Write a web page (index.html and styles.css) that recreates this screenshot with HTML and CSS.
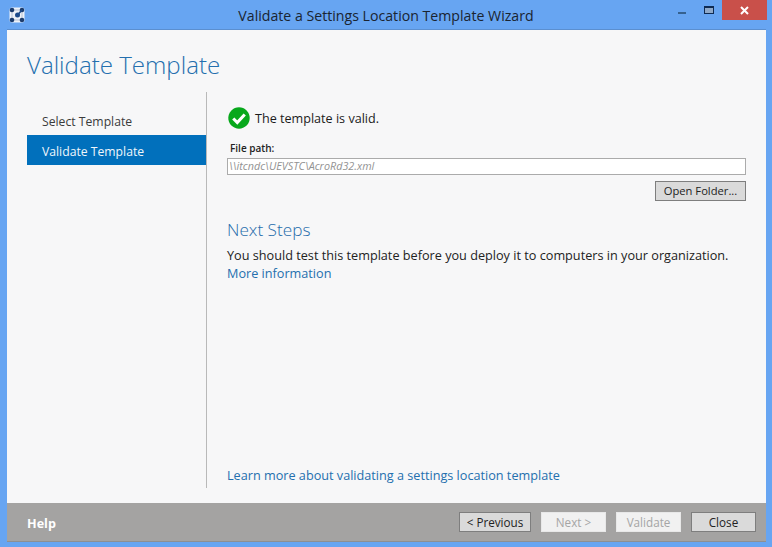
FILE: index.html
```html
<!DOCTYPE html>
<html lang="en">
<head>
<meta charset="utf-8">
<title>Validate a Settings Location Template Wizard</title>
<link rel="stylesheet" href="styles.css">
</head>
<body>
<div class="window">
  <header class="titlebar">
    <svg class="app-icon" width="16" height="16" viewBox="0 0 16 16">
      <rect x="0.5" y="0.5" width="15" height="15" rx="2.5" fill="#eef2f8"/>
      <path d="M3 5.5v5M13 5.5v5M5.5 3h5M5.5 13h5" stroke="#7f93b3" stroke-width="1" stroke-dasharray="1 1"/>
      <circle cx="3" cy="3" r="2.3" fill="#1c3d6e"/>
      <circle cx="13" cy="3" r="2.3" fill="#1c3d6e"/>
      <circle cx="3" cy="13" r="2.3" fill="#1c3d6e"/>
      <circle cx="13" cy="13" r="2.3" fill="#1c3d6e"/>
      <circle cx="8.5" cy="8" r="2.5" fill="#1c4a8a"/>
      <path d="M8.5 8 13 3" stroke="#1c4a8a" stroke-width="1.6"/>
    </svg>
    <div class="title">Validate a Settings Location Template Wizard</div>
    <div class="controls">
      <span class="min"></span>
      <span class="max"></span>
      <span class="close-btn">
        <svg width="9" height="9" viewBox="0 0 9 9"><path d="M1 1l7 7M8 1L1 8" stroke="#fff" stroke-width="2"/></svg>
      </span>
    </div>
  </header>
  <div class="client">
    <h1 class="page-title">Validate Template</h1>
    <div class="main">
      <nav class="side">
        <div class="step">Select Template</div>
        <div class="step active">Validate Template</div>
      </nav>
      <section class="content">
        <div class="status">
          <svg width="22" height="22" viewBox="0 0 23 23">
            <circle cx="11.5" cy="11.5" r="11.2" fill="#08a81c"/>
            <path d="M5.5 12l4.2 4.2 7.8-8.4" fill="none" stroke="#fff" stroke-width="3.2"/>
          </svg>
          <span class="status-text">The template is valid.</span>
        </div>
        <label class="field-label">File path:</label>
        <div class="path">\\itcndc\UEVSTC\AcroRd32.xml</div>
        <div class="folder-row"><button class="btn folder">Open Folder...</button></div>
        <h2 class="next">Next Steps</h2>
        <p class="desc">You should test this template before you deploy it to computers in your organization.</p>
        <a class="link more">More information</a>
        <a class="link learn">Learn more about validating a settings location template</a>
      </section>
    </div>
    <footer class="footer">
      <span class="help">Help</span>
      <div class="buttons">
        <button class="btn prev">&lt; Previous</button>
        <button class="btn off">Next &gt;</button>
        <button class="btn off">Validate</button>
        <button class="btn">Close</button>
      </div>
    </footer>
  </div>
</div>
</body>
</html>
```
FILE: styles.css
```css
* { box-sizing: border-box; }
html, body { margin: 0; height: 100%; }
body {
  background: #67a5f2;
  font-family: "Open Sans", "Noto Sans", sans-serif;
  overflow: hidden;
}
.window { width: 772px; height: 547px; display: flex; flex-direction: column; }
.titlebar { height: 29px; flex: none; display: flex; align-items: flex-start; padding-left: 9px; position: relative; }
.app-icon { margin-top: 7px; }
.title {
  position: absolute; left: 0; right: 0; top: 6px;
  text-align: center; font-size: 14.15px; line-height: 19px; color: #1a2430;
}
.controls { margin-left: auto; margin-right: 5px; display: flex; position: relative; align-items: flex-start; }
.min { width: 8px; height: 2px; background: #35618f; margin: 12px 18px 0 0; }
.max { width: 10px; height: 8px; border: 1px solid #0e2a52; border-top-width: 2px; background: #8fa9c9; margin: 6px 8px 0 0; }
.close-btn { width: 45px; height: 20px; background: #c9504a; display: flex; align-items: center; justify-content: center; }
.close-btn svg { display: block; }
.client {
  flex: none; width: 759px; height: 513px; margin-left: 7px;
  background: #f7f7f8; border-top: 1px solid #5b8fd0;
  display: flex; flex-direction: column;
}
.page-title {
  margin: 0; flex: none; height: 62px; padding: 16px 0 0 20px;
  font-size: 24.1px; line-height: 38px; font-weight: 300; color: #246fae;
}
.main { flex: none; height: 396px; display: flex; }
.side { width: 180px; margin-left: 20px; border-right: 1px solid #b9b9b9; padding-top: 14px; flex: none; }
.step { height: 29px; padding-left: 15px; font-size: 12.2px; line-height: 32px; color: #3b3b3b; width: 179px; }
.step.active { background: #0170bc; color: #f0f6fb; height: 30px; line-height: 33px; }
.content { flex: 1; padding: 14px 20px 0 20px; position: relative; display: flex; flex-direction: column; }
.status { display: flex; align-items: center; gap: 5px; font-size: 12.6px; color: #1b1b1b; height: 23px; }
.status svg { display: block; margin-left: 1px; }
.status-text { padding-top: 2px; }
.field-label { font-size: 10px; font-weight: 600; color: #222; margin: 12px 0 0 3px; line-height: 14px; height: 14px; }
.path {
  height: 17px; border: 1px solid #ababab; background: #fff; margin-top: 3px;
  font-size: 10.8px; font-style: italic; line-height: 13px; color: #929292; padding-left: 1px;
}
.folder-row { display: flex; justify-content: flex-end; margin-top: 6px; }
.btn {
  height: 20px; width: 65px; padding: 0; margin: 0;
  border: 1px solid #7e7e7e; background: #dadada; color: #222;
  font-family: inherit; font-size: 11.7px; line-height: 17px;
}
.folder { width: 91px; font-size: 11.2px; padding-bottom: 2px; }
.next { margin: 17px 0 0; font-size: 17.2px; line-height: 24px; font-weight: 300; color: #1f6cab; }
.desc { margin: 4px 0 0; font-size: 12.68px; line-height: 18px; color: #222; white-space: nowrap; }
.link { font-size: 12.66px; line-height: 18px; color: #246fae; }
.learn { position: absolute; left: 20px; top: 374px; }
.footer {
  flex: none; height: 39px; margin-top: 15px; background: #a4a3a2;
  border-bottom: 1px solid #8d8f92;
  display: flex; align-items: flex-start; justify-content: space-between;
}
.help { margin: 12px 0 0 20px; font-size: 12.6px; line-height: 18px; font-weight: 700; color: #fff; }
.buttons { display: flex; gap: 10px; margin: 9px 10px 0 0; }
.prev { width: 72px; }
.btn.off { background: #f1f1f1; border-color: #e8e8e8; color: #a5a5a5; }
```
